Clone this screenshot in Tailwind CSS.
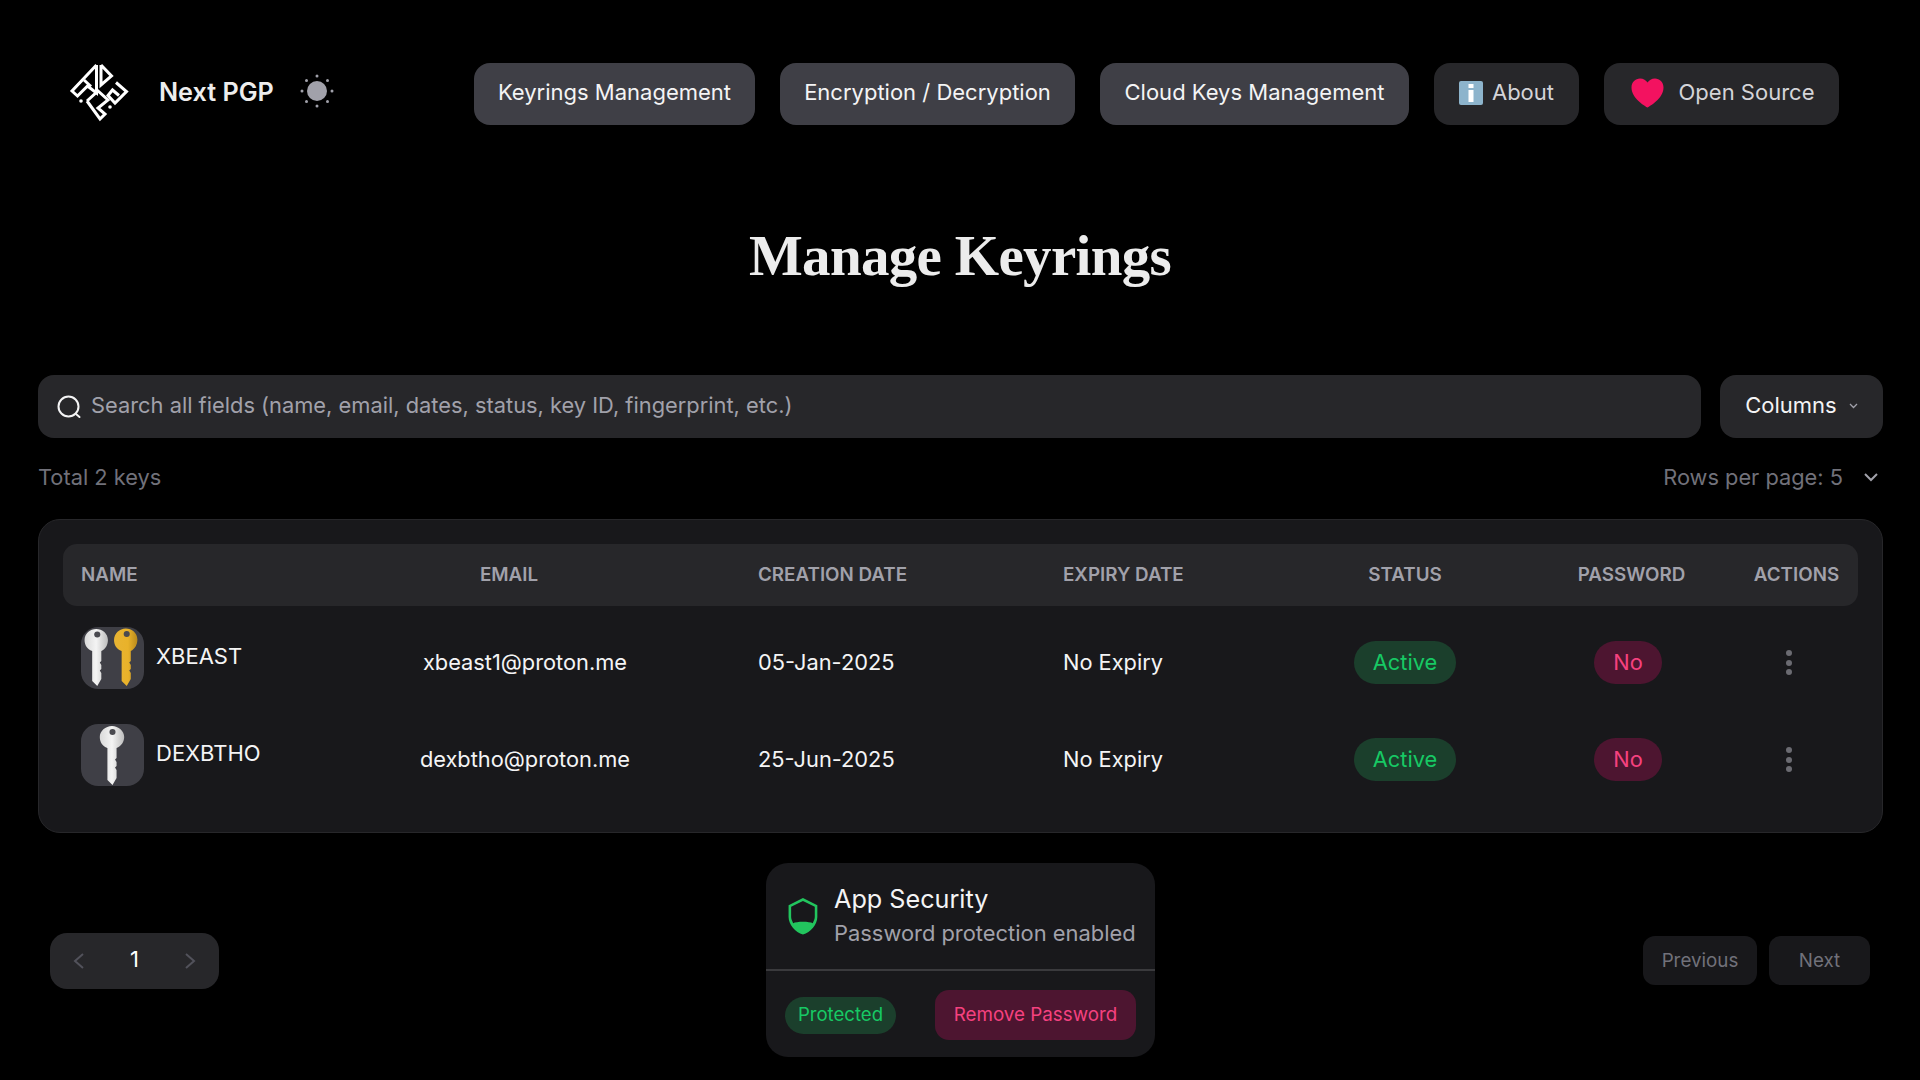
<!DOCTYPE html>
<html lang="en">
<head>
    <meta charset="UTF-8">
    <meta name="viewport" content="width=device-width, initial-scale=1.0">
    <title>Next PGP</title>
    <script src="https://cdn.jsdelivr.net/npm/@tailwindcss/browser@4"></script>
</head>
<body class="bg-black h-[1080px] overflow-hidden font-['Inter',sans-serif] text-white">
    <!-- Navbar -->
    <header class="flex items-center justify-between pt-[63px] pl-[70px] pr-[81px]">
        <div class="flex items-center">
            <svg class="w-[66px] h-[66px] -ml-[4px] -mt-[4px]" viewBox="0 0 66 66" fill="none" stroke="#fff" stroke-width="3">
                <path d="M30.500 6L6 32L11.500 37L21.500 27L30.500 34V6"/>
                <path d="M18 21L25 27.500"/>
                <path d="M35 6L45.500 17L35 26V6"/>
                <path d="M50 23.500L60.500 32.500L49 44L42 36.500L46.500 31L53 36.500"/>
                <path d="M21 42L34 60L39 55L32 49L42 41L32 32L21 42"/>
                <circle cx="15" cy="42" r="1.800" fill="#fff" stroke="none"/>
                <circle cx="44" cy="48" r="1.800" fill="#fff" stroke="none"/>
            </svg>
            <span class="ml-[27px] pb-[2px] text-[25.200px] font-semibold text-[#ededed]">Next PGP</span>
            <svg class="ml-[26px] -mt-[7px] w-[34px] h-[34px]" viewBox="0 0 34 34" fill="#a1a1aa">
                <circle cx="17" cy="17" r="10"/>
                <circle cx="17" cy="2" r="1.500"/>
                <circle cx="17" cy="32" r="1.500"/>
                <circle cx="2" cy="17" r="1.500"/>
                <circle cx="32" cy="17" r="1.500"/>
                <circle cx="6.500" cy="6.500" r="1.500"/>
                <circle cx="27.500" cy="6.500" r="1.500"/>
                <circle cx="6.500" cy="27.500" r="1.500"/>
                <circle cx="27.500" cy="27.500" r="1.500"/>
            </svg>
        </div>
        <nav class="flex items-center gap-[25px] text-[22px]">
            <a class="h-[62px] w-[281px] pb-[3px] flex items-center justify-center rounded-[16px] bg-[#3f3f46] text-[#f4f4f5]">Keyrings Management</a>
            <a class="h-[62px] w-[295px] pb-[3px] flex items-center justify-center rounded-[16px] bg-[#3f3f46] text-[#f4f4f5]">Encryption / Decryption</a>
            <a class="h-[62px] w-[309px] pb-[3px] flex items-center justify-center rounded-[16px] bg-[#3f3f46] text-[#f4f4f5]">Cloud Keys Management</a>
            <a class="h-[62px] w-[145px] pb-[3px] flex items-center justify-center gap-[9px] rounded-[16px] bg-[#27272a] text-[#d4d4d8]">
                <svg class="w-[24px] h-[24px]" viewBox="0 0 24 24">
                    <rect width="24" height="24" rx="2" fill="#8db4cc"/>
                    <rect x="9.500" y="3" width="5" height="4" fill="#fff"/>
                    <rect x="9.500" y="9" width="5" height="12" fill="#fff"/>
                </svg>
                About
            </a>
            <a class="h-[62px] w-[235px] pb-[3px] pl-[2px] flex items-center justify-center gap-[15px] rounded-[16px] bg-[#27272a] text-[#d4d4d8]">
                <svg class="w-[33px] h-[30px]" viewBox="0 0 33 30">
                    <path fill="#f31260" d="M16.500 29.500C14 28 .5 20.500.5 9.500.5 4 4.500.5 9 .5c3.500 0 6 1.700 7.500 4 1.500-2.300 4-4 7.500-4 4.500 0 8.500 3.500 8.500 9 0 11-13.500 18.500-16 20z"/>
                </svg>
                Open Source
            </a>
        </nav>
    </header>

    <h1 class="mt-[96px] text-center font-['Liberation_Serif',serif] font-bold text-[57px] tracking-[-0.670px] leading-[70px] text-[#ececec]">Manage Keyrings</h1>

    <main class="ml-[38px] mr-[37px] mt-[84px]">
        <!-- Search -->
        <div class="flex gap-[19px]">
            <div class="flex-1 h-[63px] pb-[2px] flex items-center gap-[10px] pl-[19px] rounded-[16px] bg-[#27272a] text-[21.850px] text-[#a1a1aa]">
                <svg class="w-[24px] h-[24px] mt-[2px]" viewBox="0 0 24 24" fill="none" stroke="#f4f4f5" stroke-width="2">
                    <circle cx="11.500" cy="11.500" r="10"/>
                    <path d="M19 19l3.500 3" stroke-linecap="round"/>
                </svg>
                Search all fields (name, email, dates, status, key ID, fingerprint, etc.)
            </div>
            <button class="w-[163px] h-[63px] pb-[2px] flex items-center justify-center gap-[12px] rounded-[16px] bg-[#27272a] text-[22px] text-[#f4f4f5]">
                Columns
                <svg class="w-[9px] h-[6px]" viewBox="0 0 9 6" fill="none" stroke="#a1a1aa" stroke-width="1.300"><path d="M1 1l3.500 3.500L8 1"/></svg>
            </button>
        </div>

        <div class="flex items-center justify-between h-[32px] mt-[23px] mb-[1px] text-[21.800px] text-[#71717a]">
            <span>Total 2 keys</span>
            <span class="flex items-center gap-[21px] pr-[5px]">
                Rows per page: 5
                <svg class="w-[14px] h-[9px]" viewBox="0 0 14 9" fill="none" stroke="#a1a1aa" stroke-width="2"><path d="M1 1l6 6 6-6"/></svg>
            </span>
        </div>

        <!-- Table -->
        <div class="mt-[26px] h-[314px] px-[24px] pt-[24px] rounded-[22px] bg-[#18181b] border border-[#27272a]">
            <div class="grid grid-cols-[215px_462px_305px_236px_248px_205px_125px] items-center h-[62px] rounded-[14px] bg-[#27272a] text-[18.800px] font-semibold text-[#a1a1aa]">
                <div class="pl-[18px]">NAME</div>
                <div class="text-center">EMAIL</div>
                <div class="pl-[18px]">CREATION DATE</div>
                <div class="pl-[18px]">EXPIRY DATE</div>
                <div class="text-center">STATUS</div>
                <div class="text-center">PASSWORD</div>
                <div class="text-center">ACTIONS</div>
            </div>

            <div class="grid grid-cols-[215px_462px_305px_236px_248px_205px_125px] items-center h-[97px] mt-[8px] text-[21.800px] text-[#f4f4f5]">
                <div class="flex items-center gap-[12px] pl-[18px] -mt-[13px]">
                    <svg class="w-[63px] h-[62px] shrink-0 relative top-[2px]" viewBox="0 0 62 62" preserveAspectRatio="none">
                        <defs>
                            <linearGradient id="silver" x1="0" x2="1" y1="0" y2="0"><stop offset="0" stop-color="#d9d9d9"/><stop offset="0.5" stop-color="#f4f4f4"/><stop offset="1" stop-color="#bdbdbd"/></linearGradient>
                            <linearGradient id="gold" x1="0" x2="1" y1="0" y2="0"><stop offset="0" stop-color="#e8b433"/><stop offset="0.6" stop-color="#e9b22a"/><stop offset="1" stop-color="#b98a1c"/></linearGradient>
                        </defs>
                        <rect width="62" height="62" rx="17" fill="#3f3f46"/>
                        <path fill="url(#silver)" d="M11 24C6 22 3.500 18 3.500 13 3.500 6.500 9 2 15 2s11.500 4.500 11.500 11c0 5-2.500 9-6.500 11v10l-1.500 1.500L20 38v4l-1.500 1.500L20 46v6l-4 7-5-5V24z"/>
                        <circle cx="16" cy="7.500" r="3" fill="#4a4a50"/>
                        <path fill="url(#gold)" d="M40 24c-5-2-7.500-6-7.500-11C32.500 6.500 38 1.500 44 1.500S55.500 6 55.500 12.500c0 5-2.500 9.500-6.500 11.500v10l-1.500 1.500L49 38v4l-1.500 1.500L49 46v6l-4 7-5-5V24z"/>
                        <circle cx="45" cy="7" r="3" fill="#4a4a50"/>
                    </svg>
                    <span class="text-[22px]">XBEAST</span>
                </div>
                <div class="text-center pl-[32px]">xbeast1@proton.me</div>
                <div class="pl-[18px]">05-Jan-2025</div>
                <div class="pl-[18px]">No Expiry</div>
                <div class="flex justify-center"><span class="h-[43px] w-[102px] flex items-center justify-center rounded-full bg-[#1b3f2c] text-[#17c964]">Active</span></div>
                <div class="flex justify-center pr-[7px]"><span class="h-[43px] w-[68px] flex items-center justify-center rounded-full bg-[#4d1530] text-[#f5417f]">No</span></div>
                <div class="flex flex-col items-center gap-[3.500px] pr-[16px]">
                    <span class="w-[6px] h-[6px] rounded-full bg-[#6b6b72]"></span>
                    <span class="w-[6px] h-[6px] rounded-full bg-[#6b6b72]"></span>
                    <span class="w-[6px] h-[6px] rounded-full bg-[#6b6b72]"></span>
                </div>
            </div>

            <div class="grid grid-cols-[215px_462px_305px_236px_248px_205px_125px] items-center h-[97px] text-[21.800px] text-[#f4f4f5]">
                <div class="flex items-center gap-[12px] pl-[18px] -mt-[13px]">
                    <svg class="w-[63px] h-[62px] shrink-0 relative top-[2px]" viewBox="0 0 62 62" preserveAspectRatio="none">
                        <rect width="62" height="62" rx="17" fill="#3f3f46"/>
                        <path fill="url(#silver)" d="M26 24c-5-2-7.500-6-7.500-11C18.500 7 24 2 30.500 2S42.500 7 42.500 13c0 5-3 9-7.500 11v10l-1.500 1.500L35 38v4l-1.500 1.500L35 46v8l-4 7-5-5V24z"/>
                        <circle cx="31" cy="8" r="3" fill="#4a4a50"/>
                    </svg>
                    <span class="text-[22px]">DEXBTHO</span>
                </div>
                <div class="text-center pl-[32px]">dexbtho@proton.me</div>
                <div class="pl-[18px]">25-Jun-2025</div>
                <div class="pl-[18px]">No Expiry</div>
                <div class="flex justify-center"><span class="h-[43px] w-[102px] flex items-center justify-center rounded-full bg-[#1b3f2c] text-[#17c964]">Active</span></div>
                <div class="flex justify-center pr-[7px]"><span class="h-[43px] w-[68px] flex items-center justify-center rounded-full bg-[#4d1530] text-[#f5417f]">No</span></div>
                <div class="flex flex-col items-center gap-[3.500px] pr-[16px]">
                    <span class="w-[6px] h-[6px] rounded-full bg-[#6b6b72]"></span>
                    <span class="w-[6px] h-[6px] rounded-full bg-[#6b6b72]"></span>
                    <span class="w-[6px] h-[6px] rounded-full bg-[#6b6b72]"></span>
                </div>
            </div>
        </div>

        <!-- Footer row -->
        <div class="grid grid-cols-[1fr_389px_1fr] items-center mt-[30px]">
            <div class="pl-[12px] pt-[1px]">
                <div class="w-[169px] h-[56px] flex items-center justify-between px-[23px] rounded-[17px] bg-[#27272a] text-[22px]">
                    <svg class="w-[11px] h-[16px]" viewBox="0 0 11 16" fill="none" stroke="#52525b" stroke-width="2"><path d="M10 1L2 8l8 7"/></svg>
                    <span class="pb-[2px]">1</span>
                    <svg class="w-[11px] h-[16px]" viewBox="0 0 11 16" fill="none" stroke="#52525b" stroke-width="2"><path d="M1 1l8 7-8 7"/></svg>
                </div>
            </div>

            <div class="h-[194px] rounded-[22px] bg-[#18181b]">
                <div class="h-[108px] flex items-center gap-[11px] pl-[20px] border-b-2 border-[#3a3a3d]">
                    <svg class="w-[37px] h-[42px] shrink-0" viewBox="5 8 36 40">
                        <path fill="#22c55e" fill-rule="evenodd" d="M21.500 10.500L35.500 17.500V29C35.500 36 29 44 21.500 46 14 44 7.500 36 7.500 29V17.500ZM21.500 13.500L33 19V29C33 31 32 33 31 35 28 33 15 33 12 35 11 33 10 31 10 29V19Z"/>
                    </svg>
                    <div>
                        <div class="text-[25.200px] leading-[33px] text-[#f4f4f5]">App Security</div>
                        <div class="text-[21.900px] leading-[34px] text-[#a1a1aa]">Password protection enabled</div>
                    </div>
                </div>
                <div class="flex items-center justify-between px-[19px] pt-[19px]">
                    <span class="w-[111px] h-[37px] flex items-center justify-center rounded-full bg-[#1b3f2c] text-[18.600px] text-[#17c964]">Protected</span>
                    <button class="w-[201px] h-[50px] rounded-[14px] bg-[#4d1530] text-[18.800px] text-[#f5417f]">Remove Password</button>
                </div>
            </div>

            <div class="flex justify-end gap-[12px] pr-[13px] pt-[1px] text-[18.800px] text-[#71717a]">
                <button class="w-[114px] h-[49px] pt-[2px] rounded-[12px] bg-[#18181b]">Previous</button>
                <button class="w-[101px] h-[49px] pt-[2px] rounded-[12px] bg-[#18181b]">Next</button>
            </div>
        </div>
    </main>
</body>
</html>
